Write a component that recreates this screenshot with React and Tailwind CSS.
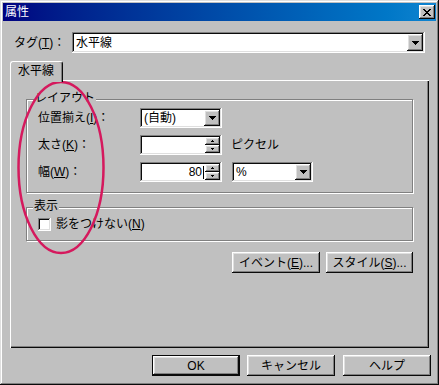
import React from 'react'

const raised = 'shadow-[inset_-1px_-1px_#0a0a0a,inset_1px_1px_#ffffff,inset_-2px_-2px_#808080,inset_2px_2px_#dfdfdf]'
const sunken = 'shadow-[inset_-1px_-1px_#ffffff,inset_1px_1px_#808080,inset_-2px_-2px_#dfdfdf,inset_2px_2px_#0a0a0a]'
const etched = 'border border-[#808080] shadow-[inset_1px_1px_#ffffff,1px_1px_#ffffff]'

function DownArrow() {
  return (
    <svg width="7" height="4" viewBox="0 0 7 4" shapeRendering="crispEdges">
      <path d="M0 0h7v1H0zM1 1h5v1H1zM2 2h3v1H2zM3 3h1v1H3z" fill="#000" />
    </svg>
  )
}

function SpinArrow({ up }) {
  return (
    <svg width="5" height="3" viewBox="0 0 5 3" shapeRendering="crispEdges">
      {up
        ? <path d="M2 0h1v1H2zM1 1h3v1H1z" fill="#000" />
        : <path d="M1 0h3v1H1zM2 1h1v1H2z" fill="#000" />}
    </svg>
  )
}

function U({ children }) {
  return <span className="underline underline-offset-[1px]">{children}</span>
}

function Combo({ className = '', value }) {
  return (
    <div className={`flex bg-white p-[2px] ${sunken} ${className}`}>
      <div className="flex-1 pl-[2px] flex items-center whitespace-nowrap overflow-hidden">{value}</div>
      <div className={`w-[16px] bg-[#c0c0c0] flex items-center justify-center ${raised}`}>
        <DownArrow />
      </div>
    </div>
  )
}

function Spin({ value }) {
  return (
    <div className={`flex w-[82px] h-[20px] bg-white p-[2px] ${sunken}`}>
      <div className="flex-1 flex items-center justify-end pr-[1px]">
        {value && <span>{value}</span>}
        {value && <span className="w-px h-[13px] bg-black ml-[1px]" />}
      </div>
      <div className="w-[15px] flex flex-col">
        <div className={`h-[8px] bg-[#c0c0c0] flex items-center justify-center ${raised}`}><SpinArrow up /></div>
        <div className={`h-[8px] bg-[#c0c0c0] flex items-center justify-center ${raised}`}><SpinArrow /></div>
      </div>
    </div>
  )
}

function Button({ children, className = '', def }) {
  const bevel = def
    ? 'shadow-[inset_-2px_-2px_#0a0a0a,inset_1px_1px_#0a0a0a,inset_2px_2px_#ffffff,inset_-3px_-3px_#808080,inset_3px_3px_#dfdfdf]'
    : raised
  return (
    <div className={`h-[21px] bg-[#c0c0c0] flex items-center justify-center whitespace-nowrap ${bevel} ${className}`}>
      {children}
    </div>
  )
}

export default function App() {
  return (
    <div
      className="relative w-[439px] h-[385px] bg-[#c0c0c0] p-[3px] text-[12px] leading-[14px] text-black shadow-[inset_-1px_-1px_#0a0a0a,inset_1px_1px_#dfdfdf,inset_-2px_-2px_#808080,inset_2px_2px_#ffffff]"
      style={{ fontFamily: '"Liberation Sans", "Noto Sans CJK JP", sans-serif' }}>
      {/* Title bar */}
      <div className="h-[18px] flex items-center justify-between pl-[2px] pr-[1px] bg-linear-to-r from-[#000080] to-[#1084d0]">
        <span className="text-white">属性</span>
        <div className={`w-[16px] h-[14px] bg-[#c0c0c0] flex items-center justify-center ${raised}`}>
          <svg width="8" height="7" viewBox="0 0 8 7" shapeRendering="crispEdges">
            <path d="M0 0h2v1h1v1h2V1h1V0h2v1H7v1H6v1H5v1h1v1h1v1h1v1H6V6H5V5H3v1H2v1H0V6h1V5h1V4h1V3H2V2H1V1H0z" fill="#000" />
          </svg>
        </div>
      </div>

      {/* Tag row */}
      <div className="flex items-center mt-[11px] pl-[11px]">
        <span className="w-[58px]">タグ(<U>T</U>)：</span>
        <Combo className="w-[353px] h-[21px]" value="水平線" />
      </div>

      {/* Tab */}
      <div className="ml-[7px] mt-[8px]">
        <div className="relative z-10 w-[53px] h-[21px] -mb-[2px] bg-[#c0c0c0] border-t border-l border-white border-r border-r-[#0a0a0a] rounded-t-[3px] shadow-[inset_-1px_0_#808080] flex items-start pt-[2px] pl-[7px]">
          水平線
        </div>
        <div className="w-[419px] h-[268px] pt-[19px] pl-[16px] shadow-[inset_1px_1px_#ffffff,inset_-1px_-1px_#0a0a0a,inset_-2px_-2px_#808080]">
          {/* Layout group */}
          <div className={`relative w-[387px] h-[94px] pt-[8px] pl-[11px] ${etched}`}>
            <span className="absolute left-[7px] -top-[9px] px-[1px] bg-[#c0c0c0]">レイアウト</span>
            <div className="flex flex-col gap-[7px]">
              <div className="flex items-center h-[20px]">
                <span className="w-[102px]">位置揃え(<U>I</U>)：</span>
                <Combo className="w-[82px] h-[20px]" value="(自動)" />
              </div>
              <div className="flex items-center h-[20px]">
                <span className="w-[102px]">太さ(<U>K</U>)：</span>
                <Spin />
                <span className="ml-[9px]">ピクセル</span>
              </div>
              <div className="flex items-center h-[20px]">
                <span className="w-[102px]">幅(<U>W</U>)：</span>
                <Spin value="80" />
                <Combo className="ml-[10px] w-[81px] h-[20px]" value="%" />
              </div>
            </div>
          </div>

          {/* Display group */}
          <div className={`relative mt-[14px] w-[387px] h-[34px] pt-[9px] pl-[11px] ${etched}`}>
            <span className="absolute left-[6px] -top-[9px] px-[1px] bg-[#c0c0c0]">表示</span>
            <div className="flex items-center gap-[5px]">
              <div className={`w-[13px] h-[13px] bg-white ${sunken}`} />
              <span>影をつけない(<U>N</U>)</span>
            </div>
          </div>

          {/* Event / style buttons */}
          <div className="flex justify-end gap-[6px] mt-[11px] w-[387px]">
            <Button className="w-[88px]">イベント(<U>E</U>)...</Button>
            <Button className="w-[87px]">スタイル(<U>S</U>)...</Button>
          </div>
        </div>
      </div>

      {/* Dialog buttons */}
      <div className="flex gap-[7px] mt-[7px] ml-[149px]">
        <Button def className="w-[88px]">OK</Button>
        <Button className="w-[88px]">キャンセル</Button>
        <Button className="w-[88px] ml-[1px]">ヘルプ</Button>
      </div>

      {/* Red annotation ellipse */}
      <svg className="absolute left-0 top-0 pointer-events-none" width="439" height="385">
        <ellipse cx="61" cy="167.5" rx="42.5" ry="85.5" fill="none" stroke="#d5195d" strokeWidth="2.5" />
      </svg>
    </div>
  )
}
